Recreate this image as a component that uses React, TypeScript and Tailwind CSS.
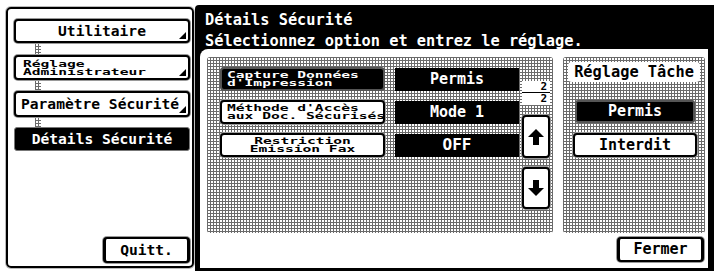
import React from "react";

const mono = "font-['DejaVu_Sans_Mono',monospace] font-bold";
const pattern =
  "bg-[linear-gradient(90deg,#6b6b6b_1px,transparent_1px),linear-gradient(#6b6b6b_1px,#ffffff_1px)] bg-size-[3px_3px]";

function Corner() {
  return (
    <span className="absolute right-[2px] bottom-[2px] w-0 h-0 border-l-[7px] border-l-transparent border-b-[7px] border-b-black" />
  );
}

function Squash({ lines, className = "" }: { lines: string[]; className?: string }) {
  return (
    <div className={`scale-y-[0.6] leading-[14px] ${className}`}>
      {lines.map((l) => (
        <div key={l} className="whitespace-pre">
          {l}
        </div>
      ))}
    </div>
  );
}

function Conn({ h }: { h: string }) {
  return <div className={`ml-[21px] w-[6px] ${h} ${pattern}`} />;
}

function Arrow({ down = false }: { down?: boolean }) {
  return (
    <svg width="18" height="18" viewBox="0 0 18 18" className={down ? "rotate-180" : ""}>
      <polygon points="9,1 17,9 12,9 12,17 6,17 6,9 1,9" fill="#000" />
    </svg>
  );
}

export default function App() {
  const whiteBtn =
    "relative flex items-center bg-white border-2 border-black rounded-[4px] shadow-[0_0_0_1px_#9a9a9a]";
  return (
    <div className={`w-[714px] h-[273px] bg-white flex overflow-hidden text-black ${mono}`}>
      {/* Left panel */}
      <div className="ml-[6px] mt-[7px] w-[188px] h-[261px] border-2 border-black rounded-[5px] flex flex-col pl-[6px] pr-[2px] pt-[10px] pb-[3px] shadow-[0_0_0_1px_#bbbbbb]">
        <div className={`${whiteBtn} w-[176px] h-[24px] justify-center text-[14.6px]`}>
          Utilitaire
          <Corner />
        </div>
        <Conn h="h-[12px]" />
        <div className={`${whiteBtn} w-[176px] h-[25px] pl-[7px] text-[14.6px]`}>
          <Squash lines={["Réglage", "Administrateur"]} />
          <Corner />
        </div>
        <Conn h="h-[11px]" />
        <div className={`${whiteBtn} w-[176px] h-[26px] pl-[5px] text-[14.6px]`}>
          Paramètre Sécurité
          <Corner />
        </div>
        <Conn h="h-[10px]" />
        <div className="flex items-center justify-center w-[176px] h-[24px] bg-black text-white rounded-[3px] border border-[#777] text-[14.6px]">
          Détails Sécurité
        </div>
        <div className="flex-1" />
        <div className={`${whiteBtn} self-end w-[87px] h-[26px] justify-center text-[14.6px] border-x-[3px]`}>
          Quitt.
        </div>
      </div>

      {/* Right panel */}
      <div className="ml-[1px] mt-[5px] w-[519px] h-[266px] bg-black rounded-tl-[4px] flex flex-col">
        <div className="h-[44px] pl-[10px] pt-[5px] text-white text-[15.3px] leading-[21px]">
          <div>Détails Sécurité</div>
          <div>Sélectionnez option et entrez le réglage.</div>
        </div>
        <div className="ml-[5px] mr-[6px] h-[219px] bg-white rounded-tl-[8px] flex flex-col">
          <div className="flex mt-[8px] pl-[7px] pr-[3px]">
            {/* settings list */}
            <div className={`w-[346px] h-[176px] flex rounded-[3px] ${pattern}`}>
              <div className="flex flex-col pl-[13px] pt-[10px] gap-[9px]">
                <div className="flex items-center h-[24px]">
                  <div className="flex items-center w-[165px] h-[24px] bg-black text-white rounded-[4px] border-2 border-[#555] pl-[5px] text-[14.6px]">
                    <Squash lines={["Capture Données", "d'Impression"]} />
                  </div>
                  <div className="ml-[10px] w-[124px] h-[23px] bg-black text-white flex items-center justify-center text-[15px]">
                    Permis
                  </div>
                </div>
                <div className="flex items-center h-[24px]">
                  <div className={`${whiteBtn} w-[165px] h-[24px] pl-[5px] text-[14.6px]`}>
                    <Squash lines={["Méthode d'Accès", "aux Doc. Sécurisés"]} />
                  </div>
                  <div className="ml-[10px] w-[124px] h-[23px] bg-black text-white flex items-center justify-center text-[15px]">
                    Mode 1
                  </div>
                </div>
                <div className="flex items-center h-[24px]">
                  <div className={`${whiteBtn} w-[165px] h-[24px] justify-center text-[14.6px]`}>
                    <Squash lines={["Restriction", "Emission Fax"]} className="text-center" />
                  </div>
                  <div className="ml-[10px] w-[124px] h-[23px] bg-black text-white flex items-center justify-center text-[16px]">
                    OFF
                  </div>
                </div>
              </div>
              <div className="ml-[3px] w-[28px] flex flex-col pt-[24px]">
                <div className="h-[24px] bg-white flex flex-col text-[11px] leading-[11px] text-right">
                  <div className="border-b border-black pr-[3px] h-[12px]">2</div>
                  <div className="pr-[3px] h-[11px]">2</div>
                </div>
                <div className={`${whiteBtn} mt-[10px] h-[43px] justify-center`}>
                  <Arrow />
                </div>
                <div className={`${whiteBtn} mt-[9px] h-[42px] justify-center`}>
                  <Arrow down />
                </div>
              </div>
            </div>

            {/* Réglage Tâche */}
            <div className={`ml-[10px] w-[142px] h-[176px] flex flex-col rounded-[3px] ${pattern}`}>
              <div className="mt-[5px] ml-[5px] w-[132px] h-[20px] bg-white rounded-[4px] flex items-center justify-center text-[15.3px]">
                Réglage Tâche
              </div>
              <div className="mt-[18px] ml-[12px] w-[120px] h-[23px] bg-black text-white rounded-[3px] border-2 border-[#555] flex items-center justify-center text-[15px]">
                Permis
              </div>
              <div className={`${whiteBtn} mt-[10px] ml-[10px] w-[124px] h-[24px] justify-center text-[15px]`}>
                Interdit
              </div>
            </div>
          </div>
          <div className="flex justify-end mt-[4px] pr-[4px]">
            <div className={`${whiteBtn} w-[87px] h-[25px] justify-center text-[15px] border-x-[3px]`}>
              Fermer
            </div>
          </div>
        </div>
      </div>
    </div>
  );
}
